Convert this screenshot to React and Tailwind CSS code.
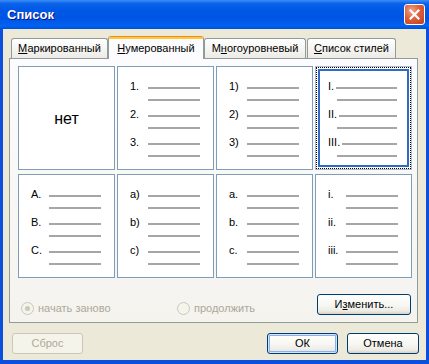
import React from 'react';

const font = "font-['Liberation_Sans',Arial,sans-serif]";

/* ---- gray preview line ---- */
function Line({ className = '' }) {
  return <div className={`h-[2px] bg-[#A6A6A6] ${className}`} />;
}

/* ---- one numbering preview cell ---- */
function ListCell({ labels, tight, selected }) {
  const body = (
    <div className="flex flex-col gap-[4px] text-[11px] text-black">
      {labels.map((l) => (
        <div key={l}>
          <div className="flex h-[12px] items-center">
            <span className={`mb-[4px] leading-[12px] ${tight ? 'mr-[2px]' : 'w-[18px] shrink-0'}`}>{l}</span>
            <Line className="flex-1" />
          </div>
          <div className="flex h-[12px] items-center">
            <Line className={`flex-1 ${tight ? 'ml-[9px]' : 'ml-[18px]'}`} />
          </div>
        </div>
      ))}
    </div>
  );

  if (selected) {
    return (
      <div className="h-[104px] border border-[#A9BCD1] bg-white">
        <div className="h-full border border-dotted border-black p-[1px]">
          <div className="h-full border-2 border-[#316AC5] pl-[8px] pr-[10px] pt-[11px]">{body}</div>
        </div>
      </div>
    );
  }
  return <div className="h-[104px] border border-[#7F9DB9] bg-white pl-[12px] pr-[13px] pt-[15px]">{body}</div>;
}

function NoneCell() {
  return (
    <div className="flex h-[104px] items-center justify-center border border-[#7F9DB9] bg-white pt-[2px] text-[16px] text-black">
      нет
    </div>
  );
}

/* ---- XP style push button ---- */
function XPButton({ children, className = '', isDefault, disabled }) {
  const look = disabled
    ? 'border-[#C9C7BA] bg-[#F5F4EA] text-[#ACA899]'
    : 'border-[#003C74] bg-[linear-gradient(180deg,#FFFFFF_0%,#F6F6F2_55%,#ECEBE4_85%,#D6D0C5_100%)] text-black';
  const ring = isDefault ? 'shadow-[inset_0_0_0_1px_#CEE7FF,inset_0_0_0_2px_#8CB0EC]' : '';
  return (
    <div className={`flex h-[21px] items-center justify-center rounded-[3px] border text-[11px] ${look} ${ring} ${className}`}>
      {children}
    </div>
  );
}

function Radio({ label, checked, className = '' }) {
  return (
    <div className={`flex items-center gap-[4px] text-[11px] text-[#ACA899] ${className}`}>
      <div className="flex h-[13px] w-[13px] items-center justify-center rounded-full border border-[#CAC8BB] bg-[#F5F4EA]">
        {checked && <div className="h-[5px] w-[5px] rounded-full bg-[#CAC8BB]" />}
      </div>
      <span className="leading-[13px]">{label}</span>
    </div>
  );
}

function Tab({ children, active, className = '' }) {
  if (active) {
    return (
      <div className={`relative z-10 -mb-px flex h-[23px] flex-col overflow-hidden rounded-t-[3px] border-x border-[#919B9C] bg-[#FCFCFE] ${className}`}>
        <div className="h-[3px] bg-[linear-gradient(180deg,#E68B2C_0%,#E68B2C_33%,#FFC83C_34%,#FFC83C_100%)]" />
        <div className="flex flex-1 items-center justify-center pb-[2px] text-[11px] text-black">{children}</div>
      </div>
    );
  }
  return (
    <div className={`flex h-[20px] items-center justify-center rounded-t-[3px] border border-b-0 border-[#919B9C] bg-[linear-gradient(180deg,#FFFFFF,#ECEBE6)] text-[11px] text-black ${className}`}>
      {children}
    </div>
  );
}

const cells = [
  { none: true },
  { labels: ['1.', '2.', '3.'] },
  { labels: ['1)', '2)', '3)'] },
  { labels: ['I.', 'II.', 'III.'], tight: true, selected: true },
  { labels: ['A.', 'B.', 'C.'] },
  { labels: ['a)', 'b)', 'c)'] },
  { labels: ['a.', 'b.', 'c.'] },
  { labels: ['i.', 'ii.', 'iii.'] },
];

export default function App() {
  return (
    <div className={`flex h-[364px] w-[429px] flex-col ${font}`}>
      {/* Title bar */}
      <div className="flex h-[29px] shrink-0 items-center bg-[linear-gradient(180deg,#3D8EF5_0%,#0A63EA_12%,#0058E6_35%,#0054E3_65%,#0063F2_88%,#0050DA_100%)] pl-[7px] pr-[4px]">
        <span className="text-[13px] font-bold text-white [text-shadow:1px_1px_#0F1089]">Список</span>
        <div className="ml-auto flex h-[21px] w-[21px] items-center justify-center rounded-[3px] border border-white bg-[radial-gradient(circle_at_35%_30%,#F2A587_0%,#DE5F3A_45%,#C23D1D_100%)]">
          <svg width="11" height="11" viewBox="0 0 11 11">
            <path d="M1.5 1.5 L9.5 9.5 M9.5 1.5 L1.5 9.5" stroke="white" strokeWidth="2.2" strokeLinecap="square" />
          </svg>
        </div>
      </div>

      {/* Dialog body */}
      <div className="flex flex-1 flex-col border-x-[3px] border-b-4 border-[#0B4FDF] bg-[#ECE9D8] pt-[7px]">
        <div className="ml-[6px] w-[409px]">
          {/* Tabs */}
          <div className="flex h-[22px] items-end pl-[2px]">
            <Tab className="w-[97px]"><span><u>М</u>аркированный</span></Tab>
            <Tab active className="w-[96px]"><span><u>Н</u>умерованный</span></Tab>
            <Tab className="w-[102px]"><span>М<u>н</u>огоуровневый</span></Tab>
            <Tab className="ml-[1px] w-[89px]"><span><u>С</u>писок стилей</span></Tab>
          </div>

          {/* Tab page */}
          <div className="h-[265px] border border-[#919B9C] bg-[linear-gradient(180deg,#FCFCFE,#F4F3EE)] pl-[8px] pt-[7px]">
            <div className="grid grid-cols-[repeat(4,97px)] gap-x-[2px] gap-y-[4px]">
              {cells.map((c, i) =>
                c.none ? <NoneCell key={i} /> : <ListCell key={i} labels={c.labels} tight={c.tight} selected={c.selected} />
              )}
            </div>
            <div className="mt-[16px] flex w-[393px] items-start">
              <div className="ml-[3px] mt-[8px] flex">
                <Radio className="w-[156px]" label="начать заново" checked />
                <Radio label="продолжить" />
              </div>
              <XPButton className="ml-auto w-[94px]">
                <span>И<u>з</u>менить...</span>
              </XPButton>
            </div>
          </div>
        </div>

        {/* Bottom buttons */}
        <div className="mt-[10px] flex items-center pl-[9px] pr-[7px]">
          <XPButton disabled className="w-[71px]">Сброс</XPButton>
          <XPButton isDefault className="ml-auto w-[71px]">ОК</XPButton>
          <XPButton className="ml-[9px] w-[72px]">Отмена</XPButton>
        </div>
      </div>
    </div>
  );
}
